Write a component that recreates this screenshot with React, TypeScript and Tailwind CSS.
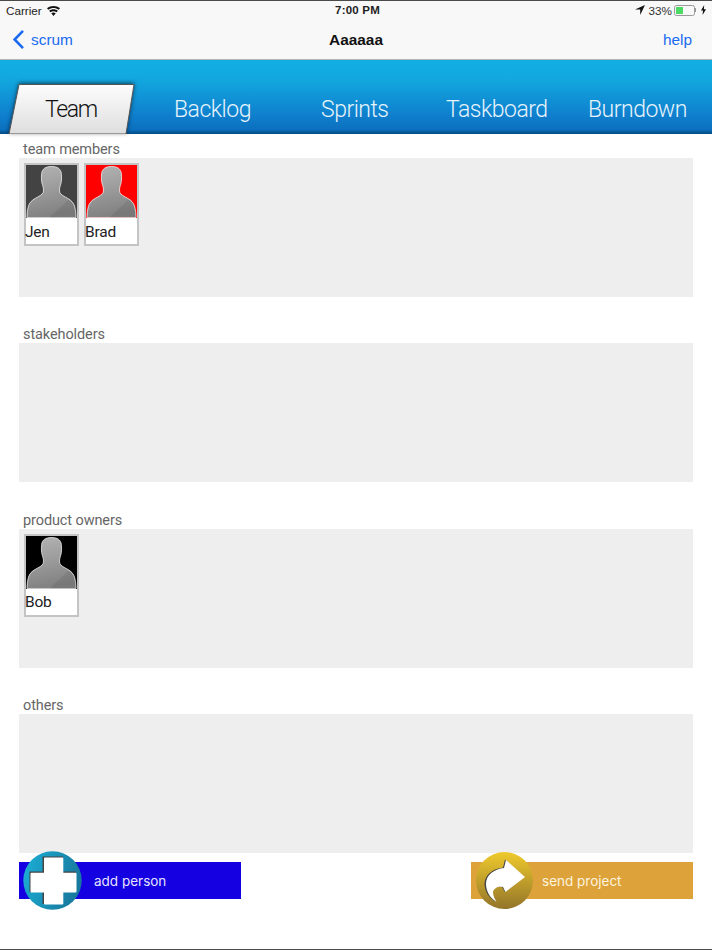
import React from "react";

function Silhouette({ id }: { id: string }) {
  return (
    <svg viewBox="0 0 52 53" className="block w-full h-full">
      <defs>
        <linearGradient id={id} x1="0" y1="0" x2="0.2" y2="1">
          <stop offset="0" stopColor="#b4b4b4" />
          <stop offset="0.5" stopColor="#9c9c9c" />
          <stop offset="1" stopColor="#828282" />
        </linearGradient>
      </defs>
      <path
        d="M26 1C20 1 16.5 3.5 16 8C15.6 11 15.6 14 16 16.5C16.2 18.5 17 20 17.5 22C18 24 18 26 17.5 27.5C16.5 30 13 31.5 9.5 33.5C6 35.5 3.5 38 2.5 41.5C1.5 45 1 49 1 53H51C51 49 50.5 45 49.5 41.5C48.5 38 46 35.5 42.5 33.5C39 31.5 35.5 30 34.5 27.5C34 26 34 24 34.5 22C35 20 35.8 18.5 36 16.5C36.4 14 36.4 11 36 8C35.5 3.5 32 1 26 1Z"
        fill={`url(#${id})`}
        stroke="#efefef"
        strokeWidth="0.8"
      />
      <path d="M24 53L43 35C46 37 48 39 49 42C50.5 45 51 49 51 53Z" fill="#000" opacity="0.07" />
    </svg>
  );
}

function Person({ name, bg, id }: { name: string; bg: string; id: string }) {
  return (
    <div className="w-[55px] h-[83px] border-2 border-[#c4c4c4] bg-white flex flex-col">
      <div className={`h-[53px] ${bg}`}>
        <Silhouette id={id} />
      </div>
      <div className="flex-1 flex items-center font-['Roboto',sans-serif] text-[15.5px] leading-none tracking-[-0.2px] text-[#222] -ml-[1px] pt-[3px]">{name}</div>
    </div>
  );
}

function Section({ label, children }: { label: string; children?: React.ReactNode }) {
  return (
    <section>
      <div className="h-[24px] pl-[4px] pt-[7px] font-['Roboto',sans-serif] text-[14.5px] leading-[17px] tracking-[-0.1px] text-[#666]">{label}</div>
      <div className="h-[139px] bg-[#eeeeee] flex gap-[5px] pl-[5px] pt-[5px] items-start">{children}</div>
    </section>
  );
}

function Tab({ label }: { label: string }) {
  return <div className="text-[23px] leading-none tracking-[-0.5px] text-[#e6f3fb] font-light whitespace-nowrap">{label}</div>;
}

export default function App() {
  return (
    <div className="w-[712px] h-[950px] bg-white flex flex-col overflow-hidden font-['Liberation_Sans',sans-serif] border-t border-b border-[#4a4a4a]">
      {/* status bar */}
      <div className="h-[19px] bg-[#f8f8f8] flex items-center justify-between px-[6px] text-[11.7px] text-[#222]">
        <div className="flex items-center gap-[4px] w-[203px]">
          <span>Carrier</span>
          <svg width="15" height="11" viewBox="0 0 15 11">
            <path d="M7.5 11L5.3 8.3C6.6 7.3 8.4 7.3 9.7 8.3Z" fill="#111" />
            <path d="M4.4 7.2L3.2 5.8C5.7 3.8 9.3 3.8 11.8 5.8L10.6 7.2C8.7 5.8 6.3 5.8 4.4 7.2Z" fill="#111" />
            <path d="M2.4 4.8L1 3.3C4.7 0.2 10.3 0.2 14 3.3L12.6 4.8C9.6 2.4 5.4 2.4 2.4 4.8Z" fill="#111" />
          </svg>
        </div>
        <span className="font-bold text-[11.5px] tracking-[0.2px]">7:00 PM</span>
        <div className="flex items-center justify-end w-[200px]">
          <svg width="10" height="10" viewBox="0 0 10 10" className="mr-[4px]">
            <path d="M10 0L0 4.6H5.2V10Z" fill="#111" />
          </svg>
          <span className="text-[#333] mr-[2px]">33%</span>
          <div className="w-[21px] h-[11px] border border-[#999] rounded-[2.5px] p-[1px]">
            <div className="w-[7px] h-full bg-[#4cd964]" />
          </div>
          <div className="w-[1px] h-[4px] bg-[#999] mr-[5px]" />
          <svg width="5" height="10" viewBox="0 0 5 10">
            <path d="M3.2 0L0 5.6H2L1.6 10L5 4.2H2.9Z" fill="#111" />
          </svg>
        </div>
      </div>
      {/* nav bar */}
      <div className="h-[40px] bg-[#f8f8f8] border-b border-[#b5b5b5] flex items-center justify-between pl-[12px] pr-[20px] text-[15.4px] text-[#1a6bf0]">
        <div className="flex items-center gap-[6px] w-[208px]">
          <svg width="13" height="21" viewBox="0 0 13 21">
            <path d="M11 1.8L2.6 10.5L11 19.2" fill="none" stroke="#1a6bf0" strokeWidth="2.6" />
          </svg>
          <span>scrum</span>
        </div>
        <span className="font-bold text-[#111]">Aaaaaa</span>
        <div className="w-[200px] text-right">help</div>
      </div>
      {/* tab bar */}
      <div className="relative h-[74px] bg-[linear-gradient(#12aee3_0%,#12a8df_25%,#0f7fcd_75%,#0b70bf_94%,#064a80_100%)] flex items-end pb-[13px] pl-[174px] font-['Roboto',sans-serif] shrink-0">
        <svg width="140" height="56" viewBox="0 0 140 56" className="absolute left-0 bottom-0 drop-shadow-[0_-1px_2px_rgba(0,0,0,0.55)]">
          <defs>
            <linearGradient id="tabFill" x1="0" y1="0" x2="0" y2="1">
              <stop offset="0" stopColor="#fdfdfd" />
              <stop offset="1" stopColor="#dedede" />
            </linearGradient>
          </defs>
          <path d="M19 6.5H134L126 56H9Z" fill="url(#tabFill)" stroke="#555" strokeWidth="1" strokeLinejoin="round" />
        </svg>
        <div className="absolute left-[45px] bottom-[13px] text-[23px] leading-none tracking-[-1.4px] text-[#111] font-light">Team</div>
        <div className="flex items-end">
          <div className="w-[147px]"><Tab label="Backlog" /></div>
          <div className="w-[125px]"><Tab label="Sprints" /></div>
          <div className="w-[142px]"><Tab label="Taskboard" /></div>
          <Tab label="Burndown" />
        </div>
      </div>
      {/* content */}
      <main className="px-[19px] flex flex-col gap-[22.33px] h-[719px]">
        <Section label="team members">
          <Person name="Jen" bg="bg-[#434343]" id="p1" />
          <Person name="Brad" bg="bg-[#ff0000]" id="p2" />
        </Section>
        <Section label="stakeholders" />
        <Section label="product owners">
          <Person name="Bob" bg="bg-black" id="p3" />
        </Section>
        <Section label="others" />
      </main>
      {/* buttons */}
      <div className="relative px-[19px] flex justify-between mt-[9px]">
        <div className="w-[222px] h-[37px] bg-[#1400e0] flex items-center pl-[75px] pt-[2px] text-[13.5px] text-[#e6e3ff] font-['Inter',sans-serif]">
          add person
        </div>
        <div className="w-[222px] h-[37px] bg-[#dda33a] flex items-center pl-[71px] pt-[2px] text-[13.5px] text-[#fdf3df] font-['Inter',sans-serif]">
          send project
        </div>
        <svg width="60" height="60" viewBox="0 0 60 60" className="absolute left-[23px] -top-[11px]">
          <defs>
            <linearGradient id="blueC" x1="0" y1="0" x2="1" y2="0.3">
              <stop offset="0" stopColor="#1cb0d8" />
              <stop offset="1" stopColor="#187a9e" />
            </linearGradient>
            <filter id="soft"><feGaussianBlur stdDeviation="0.7" /></filter>
          </defs>
          <circle cx="29.5" cy="29.5" r="29.2" fill="url(#blueC)" />
          <path d="M19.5 5.5H40V20.5H53V41H40V53H19.5V41H6.5V20.5H19.5Z" fill="#444" filter="url(#soft)" />
          <path d="M21 7.5C21 7 21.5 6.5 22 6.5H39.5C40 6.5 40.3 7 40.3 7.5V21.7H52.8C53.3 21.7 53.5 22 53.5 22.5V40.5C53.5 41 53 41.5 52.5 41.5H40.3V52.5C40.3 53 40 53.5 39.5 53.5H22C21.5 53.5 21 53 21 52.5V41.5H8.5C8 41.5 7.5 41 7.5 40.5V22.7C7.5 22.2 8 21.7 8.5 21.7H21Z" fill="#fff" />
        </svg>
        <svg width="60" height="60" viewBox="0 0 60 60" className="absolute left-[475px] -top-[11px]">
          <defs>
            <linearGradient id="goldC" x1="0" y1="0" x2="0" y2="1">
              <stop offset="0" stopColor="#efca2c" />
              <stop offset="1" stopColor="#93752a" />
            </linearGradient>
            <filter id="soft2"><feGaussianBlur stdDeviation="0.6" /></filter>
          </defs>
          <circle cx="29.5" cy="29.5" r="28.5" fill="url(#goldC)" />
          <path d="M30 8.5L49 26L30 41L27 36C22 35 18 37 17 41C17 45 19 48 21 51C14 47 9.5 40 9.5 33C9.5 24 18 17.5 28 16.5Z" fill="#444" filter="url(#soft2)" />
          <path d="M31 9L50 26L30.5 41L28 36C23 35 19 37 18 41C18 45 20 48 21.5 51C15 47 11 40 11 33C11 24 19 18 29 17Z" fill="#fff" />
        </svg>
      </div>
    </div>
  );
}
